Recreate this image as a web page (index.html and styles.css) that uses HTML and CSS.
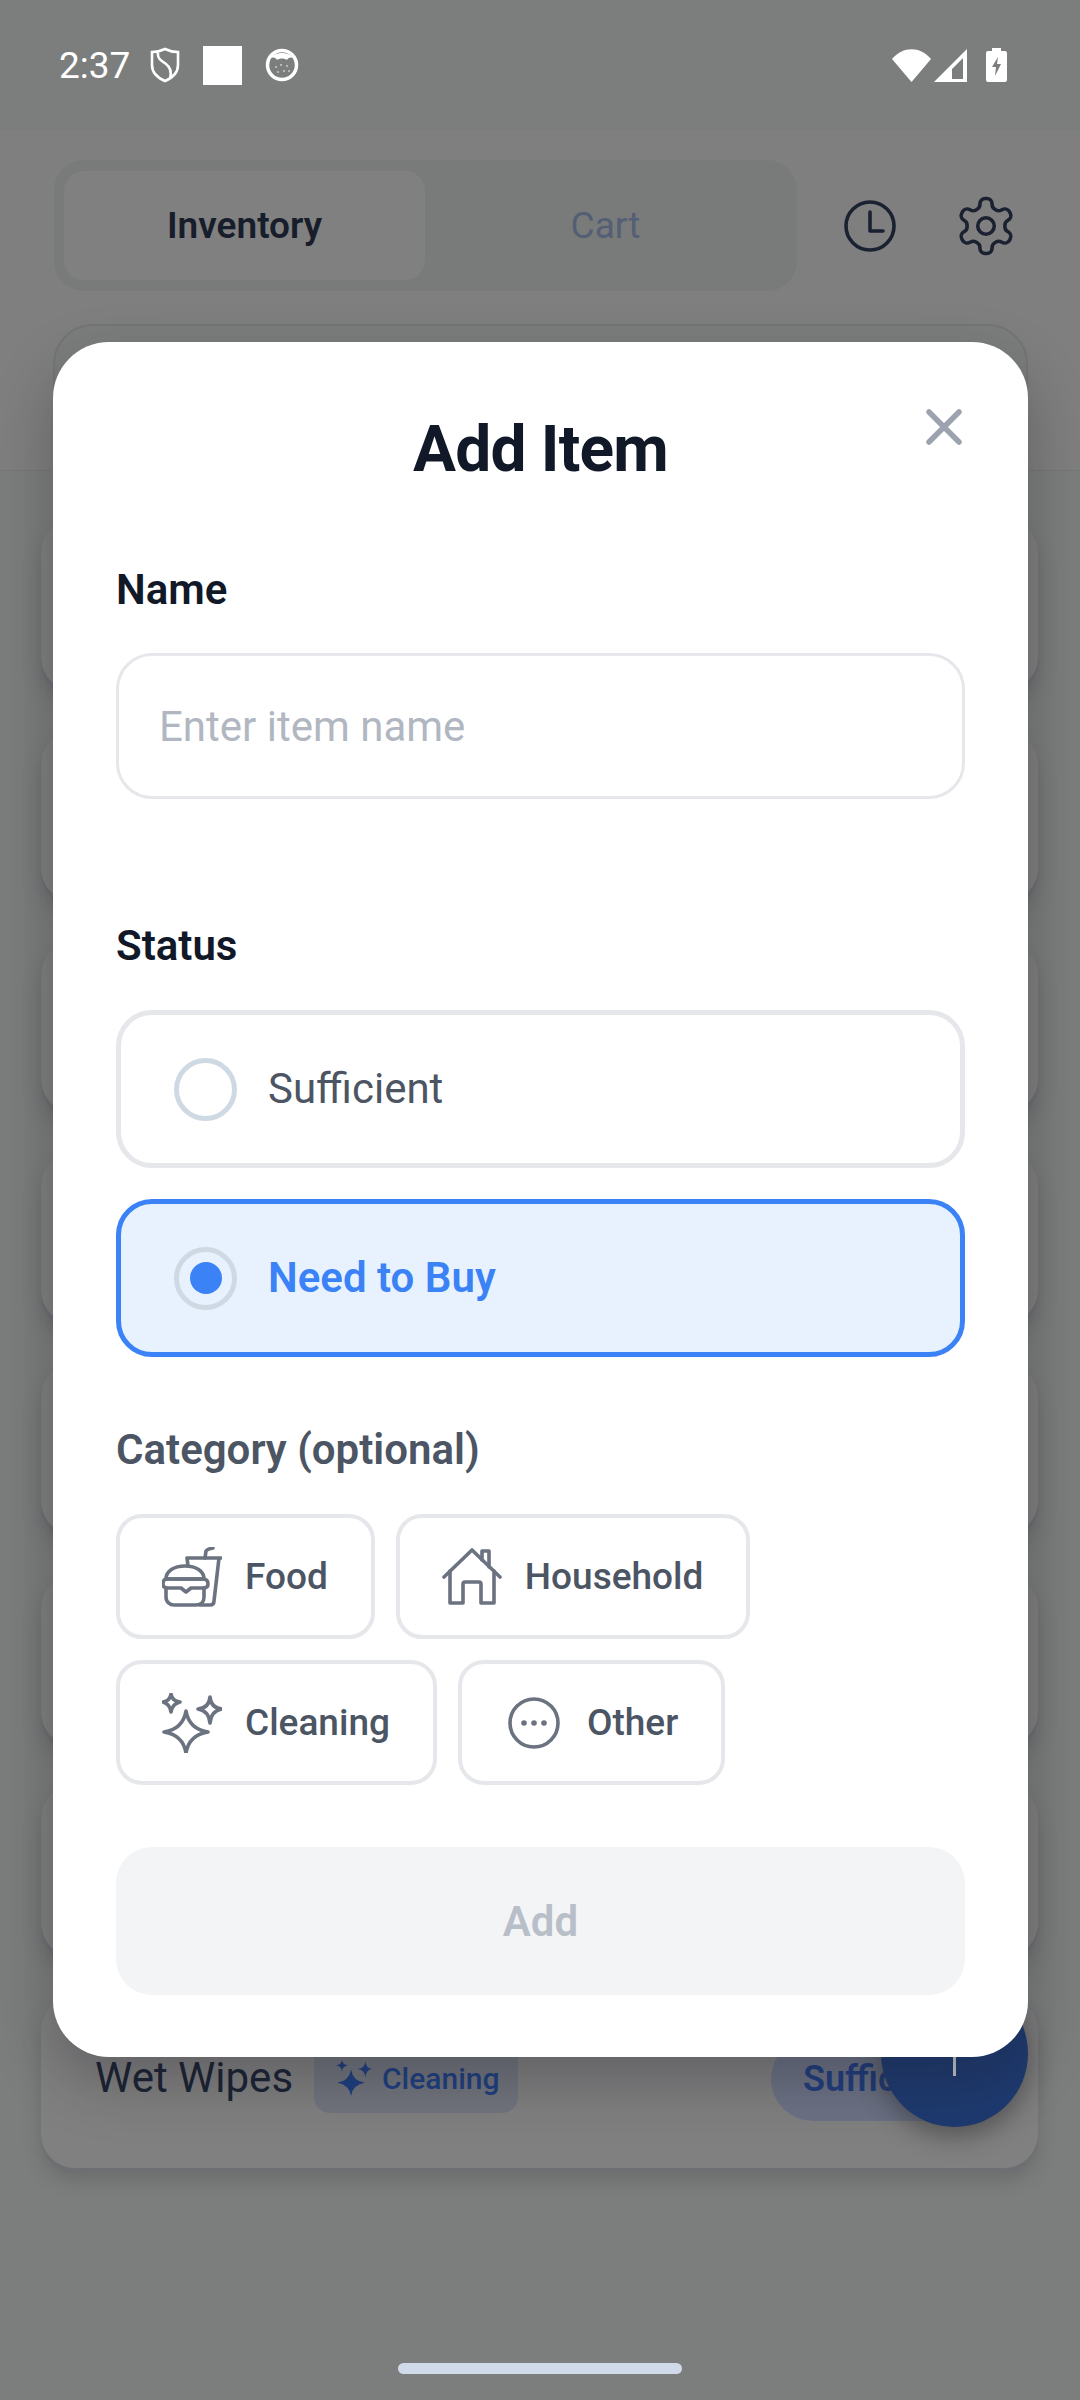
FILE: index.html
```html
<!DOCTYPE html>
<html lang="en">

<head>
    <meta charset="UTF-8">
    <title>Add Item</title>
    <link rel="stylesheet" href="styles.css">
</head>

<body>
    <div class="screen">
        <div class="status-bar">
            <div class="status-left">
                <span class="status-time">2:37</span>
                <svg class="icon-shield" width="30" height="36" viewBox="0 0 30 36" fill="none" stroke="#fff" stroke-width="2.6">
                    <path d="M15 2 C19 4 24 5 28 5 V18 C28 26 22 31 15 34 C8 31 2 26 2 18 V5 C6 5 11 4 15 2z" />
                    <path d="M8 6 C7 12 12 14 16 17 C20 20 22 24 20 31" />
                </svg>
                <div class="status-square"></div>
                <svg class="icon-face" width="34" height="34" viewBox="0 0 34 34">
                    <circle cx="17" cy="17" r="14.5" fill="#7c7e7d" stroke="#fff" stroke-width="3.5" />
                    <path d="M5 11 C9 3 25 3 29 11 C26 8 23 10 22 12 C19 10 15 10 12 12 C11 10 8 8 5 11z" fill="#fff" />
                    <g fill="#c9ccce">
                        <circle cx="11" cy="19" r="1" /><circle cx="16" cy="17" r="1" /><circle cx="22" cy="18" r="1" />
                        <circle cx="13" cy="24" r="1" /><circle cx="19" cy="23" r="1" /><circle cx="24" cy="23" r="1" />
                    </g>
                </svg>
            </div>
            <div class="status-right">
                <svg width="39" height="33" viewBox="0 0 39 33">
                    <path d="M0 10 C11 -3 28 -3 39 10 L19.5 33z" fill="#fff" />
                </svg>
                <svg width="33" height="33" viewBox="0 0 33 33">
                    <path fill-rule="evenodd" d="M33 0 V33 H0z M29 9 L18 20 V30 H29z" fill="#fff" />
                </svg>
                <svg class="icon-battery" width="21" height="34" viewBox="0 0 21 34">
                    <path d="M6 0 H15 V3 H19 Q21 3 21 5 V32 Q21 34 19 34 H2 Q0 34 0 32 V5 Q0 3 2 3 H6z" fill="#fff" />
                    <path d="M12 9 L6 19 H10 L9 28 L15 16 H11z" fill="#7c7e7d" />
                </svg>
            </div>
        </div>

        <div class="top-area">
            <div class="tabs-row">
                <div class="tabs">
                    <div class="tab tab-active">Inventory</div>
                    <div class="tab">Cart</div>
                </div>
                <svg class="icon-clock" width="54" height="54" viewBox="0 0 54 54" fill="none" stroke="#1a2130" stroke-width="3.6" stroke-linecap="round" stroke-linejoin="round">
                    <circle cx="27" cy="27" r="24" />
                    <path d="M27 13 V32 H40" />
                </svg>
                <svg class="icon-gear" width="66" height="66" viewBox="0 0 24 24" fill="none" stroke="#1a2130" stroke-width="1.3" stroke-linecap="round" stroke-linejoin="round">
                    <path d="M12.22 2h-.44a2 2 0 0 0-2 2v.18a2 2 0 0 1-1 1.73l-.43.25a2 2 0 0 1-2 0l-.15-.08a2 2 0 0 0-2.73.73l-.22.38a2 2 0 0 0 .73 2.73l.15.1a2 2 0 0 1 1 1.72v.51a2 2 0 0 1-1 1.74l-.15.09a2 2 0 0 0-.73 2.73l.22.38a2 2 0 0 0 2.73.73l.15-.08a2 2 0 0 1 2 0l.43.25a2 2 0 0 1 1 1.73V20a2 2 0 0 0 2 2h.44a2 2 0 0 0 2-2v-.18a2 2 0 0 1 1-1.73l.43-.25a2 2 0 0 1 2 0l.15.08a2 2 0 0 0 2.73-.73l.22-.39a2 2 0 0 0-.73-2.73l-.15-.08a2 2 0 0 1-1-1.74v-.5a2 2 0 0 1 1-1.74l.15-.09a2 2 0 0 0 .73-2.73l-.22-.38a2 2 0 0 0-2.73-.73l-.15.08a2 2 0 0 1-2 0l-.43-.25a2 2 0 0 1-1-1.73V4a2 2 0 0 0-2-2z" />
                    <circle cx="12" cy="12" r="3" />
                </svg>
            </div>
            <div class="filter-panel"></div>
        </div>

        <div class="list">
            <div class="card"></div>
            <div class="card"></div>
            <div class="card"></div>
            <div class="card"></div>
            <div class="card"></div>
            <div class="card"></div>
            <div class="card"></div>
            <div class="card">
                <span class="card-name">Wet Wipes</span>
                <span class="card-chip">
                    <svg width="36" height="36" viewBox="0 0 60 60" fill="#1e3f80">
                        <path d="M25 16 Q28 35 48 38 Q28 41 25 60 Q22 41 2 38 Q22 35 25 16z" />
                        <path d="M10 0 Q11 8 20 9 Q11 10 10 19 Q9 10 0 9 Q9 8 10 0z" />
                        <path d="M49 2 Q50 14 60 15 Q50 16 49 29 Q48 16 36 15 Q48 14 49 2z" />
                    </svg>
                    Cleaning
                </span>
                <span class="card-status">Sufficient</span>
            </div>
        </div>

        <div class="home-bar"></div>

        <div class="fab"><span class="fab-line"></span></div>

        <div class="modal">
            <svg class="modal-close" width="36" height="36" viewBox="0 0 36 36" fill="none" stroke="#9ca3af" stroke-width="5.5" stroke-linecap="round">
                <path d="M3 3 L33 33 M33 3 L3 33" />
            </svg>
            <h1 class="modal-title">Add Item</h1>

            <div class="field-label">Name</div>
            <div class="text-input">Enter item name</div>

            <div class="field-label status-label">Status</div>
            <div class="option">
                <span class="radio"></span>
                <span class="option-text">Sufficient</span>
            </div>
            <div class="option option-selected">
                <span class="radio"><span class="radio-dot"></span></span>
                <span class="option-text">Need to Buy</span>
            </div>

            <div class="field-label category-label">Category (optional)</div>
            <div class="chips">
                <div class="chip">
                    <svg width="60" height="60" viewBox="0 0 60 60" fill="none" stroke="#6b7280" stroke-width="3.6" stroke-linecap="round" stroke-linejoin="round">
                        <path d="M4 32 C4 24 12 19 23 19 C34 19 42 24 42 32z" />
                        <path d="M5 32 H41 Q46 32 46 37 Q46 41 41 41 H29 L24 45 L19 41 H6 Q1 41 1 37 Q1 32 5 32z" />
                        <path d="M4 41 V50 C4 55 8 58 12 58 H34 C39 58 42 55 42 50 V41" />
                        <path d="M26 19 L25 11 H59 M57 11 L52 54 Q52 58 48 58 H38" />
                        <path d="M43 11 L44 4 Q45 2 51 1" />
                    </svg>
                    <span>Food</span>
                </div>
                <div class="chip">
                    <svg width="60" height="60" viewBox="0 0 60 60" fill="none" stroke="#6b7280" stroke-width="3.6" stroke-linecap="round" stroke-linejoin="round">
                        <path d="M2 30 L30 3 L58 30" />
                        <path d="M8 24 V56 H21 V37 Q21 35 23 35 H37 Q39 35 39 37 V56 H52 V24" />
                        <path d="M40 13 V4 H47 V20" />
                    </svg>
                    <span>Household</span>
                </div>
                <div class="chip">
                    <svg width="60" height="60" viewBox="0 0 60 60" fill="none" stroke="#6b7280" stroke-width="3.6" stroke-linecap="round" stroke-linejoin="round">
                        <path d="M24 18 Q27 36 46 39 Q27 42 24 60 Q21 42 2 39 Q21 36 24 18z" />
                        <path d="M9 1 Q10 8 18 9 Q10 11 9 19 Q8 11 1 9 Q8 8 9 1z" />
                        <path d="M48 4 Q49 15 60 16 Q49 18 48 30 Q47 18 36 16 Q47 15 48 4z" />
                    </svg>
                    <span>Cleaning</span>
                </div>
                <div class="chip">
                    <svg width="60" height="60" viewBox="0 0 60 60" fill="none" stroke="#6b7280" stroke-width="3.6">
                        <circle cx="30" cy="30" r="24" />
                        <g fill="#6b7280" stroke="none">
                            <circle cx="20" cy="30" r="2.8" />
                            <circle cx="30" cy="30" r="2.8" />
                            <circle cx="40" cy="30" r="2.8" />
                        </g>
                    </svg>
                    <span>Other</span>
                </div>
            </div>

            <div class="add-button">Add</div>
        </div>
    </div>
</body>

</html>
```

FILE: styles.css
```css
* {
    box-sizing: border-box;
}

body {
    margin: 0;
    background-color: #7c7e7d;
    font-family: Roboto, "Liberation Sans", sans-serif;
}

.screen {
    position: relative;
    display: flex;
    flex-direction: column;
    width: 1080px;
    height: 2400px;
    overflow: hidden;
}

/* status bar */
.status-bar {
    display: flex;
    justify-content: space-between;
    align-items: center;
    height: 130px;
    padding: 0 73px 0 59px;
}

.status-left {
    display: flex;
    align-items: center;
}

.status-time {
    width: 91px;
    color: #fff;
    font-size: 37px;
}

.status-square {
    width: 39px;
    height: 39px;
    margin: 0 23px;
    background-color: #fff;
}

.status-right {
    display: flex;
    align-items: center;
    gap: 3px;
}

.icon-battery {
    margin-left: 16px;
}

/* header behind the dialog */
.top-area {
    height: 341px;
    padding: 30px 0 0 54px;
    background-color: #7f7f7f;
    border-bottom: 1px solid #767877;
}

.tabs-row {
    display: flex;
    align-items: center;
}

.tabs {
    display: flex;
    width: 743px;
    height: 131px;
    padding: 11px 10px;
    background-color: #797b7a;
    border-radius: 30px;
}

.tab {
    display: flex;
    justify-content: center;
    align-items: center;
    width: 361px;
    color: #545e74;
    font-size: 37px;
    font-weight: 600;
}

.tab-active {
    background-color: #808080;
    border-radius: 20px;
    color: #171d2a;
}

.tab-active + .tab {
    font-weight: 400;
}

.icon-clock {
    margin-left: 46px;
}

.icon-gear {
    margin-left: 56px;
}

.filter-panel {
    width: 975px;
    height: 130px;
    margin: 33px 0 0 -1px;
    background-color: #7c7e7d;
    border: 2px solid #747675;
    border-radius: 40px;
}

.list {
    display: flex;
    flex-direction: column;
    gap: 39px;
    padding: 48px 42px 0 41px;
}

.card {
    display: flex;
    align-items: flex-start;
    height: 172px;
    padding: 41px 0 0 54px;
    background-color: #808080;
    border-radius: 34px;
    box-shadow: 0 5px 0 #6e6f72, 0 12px 18px rgba(60, 60, 65, 0.25);
}

.card-name {
    width: 219px;
    height: 84px;
    line-height: 82px;
    color: #1a2233;
    font-size: 42px;
}

.card-chip {
    display: flex;
    align-items: center;
    gap: 10px;
    width: 204px;
    height: 70px;
    margin-top: 6px;
    padding-left: 22px;
    background-color: #72757d;
    border-radius: 16px;
    color: #1e3f80;
    font-size: 30px;
    font-weight: 500;
}

.card-status {
    width: 230px;
    height: 84px;
    margin-left: 253px;
    padding-left: 32px;
    line-height: 84px;
    background-color: #6c7284;
    border-radius: 42px;
    color: #1f3d7d;
    font-size: 36px;
    font-weight: 600;
}

.home-bar {
    width: 284px;
    height: 11px;
    margin: auto auto 26px;
    background-color: #d0dae8;
    border-radius: 6px;
}

.fab {
    position: absolute;
    left: 881px;
    top: 1980px;
    display: flex;
    justify-content: center;
    width: 147px;
    height: 147px;
    background-color: #1e3a70;
    border-radius: 50%;
    box-shadow: 0 10px 24px rgba(40, 40, 45, 0.45);
}

.fab-line {
    width: 3px;
    height: 20px;
    margin-top: 76px;
    background-color: #c4c8cc;
}

/* dialog */
.modal {
    position: absolute;
    left: 53px;
    top: 342px;
    width: 975px;
    height: 1715px;
    padding: 70px 63px 0;
    background-color: #fff;
    border-radius: 56px;
    box-shadow: 0 24px 60px rgba(25, 25, 35, 0.3);
}

.modal-close {
    position: absolute;
    top: 67px;
    right: 66px;
}

.modal-title {
    margin: 0 0 77px;
    color: #111827;
    font-size: 64px;
    line-height: 76px;
    font-weight: 700;
    letter-spacing: -0.8px;
    text-align: center;
}

.field-label {
    height: 48px;
    padding-top: 1px;
    color: #111827;
    font-size: 42px;
    line-height: 48px;
    font-weight: 600;
}

.text-input {
    display: flex;
    align-items: center;
    height: 146px;
    margin-top: 40px;
    padding-left: 40px;
    border: 3px solid #e5e7eb;
    border-radius: 36px;
    color: #b1b7c1;
    font-size: 42px;
}

.status-label {
    margin-top: 122px;
    margin-bottom: 41px;
}

.option {
    display: flex;
    align-items: center;
    gap: 31px;
    height: 158px;
    margin-bottom: 31px;
    padding-left: 53px;
    border: 5px solid #e5e7eb;
    border-radius: 36px;
    color: #4b5563;
    font-size: 42px;
}

.option-text {
    margin-bottom: 2px;
}

.option-selected {
    background-color: #e8f2fe;
    border-color: #3b82f6;
    color: #3b82f6;
    font-weight: 600;
}

.radio {
    display: flex;
    justify-content: center;
    align-items: center;
    width: 63px;
    height: 63px;
    border: 5px solid #cfd9e4;
    border-radius: 50%;
}

.radio-dot {
    width: 32px;
    height: 32px;
    background-color: #3b82f6;
    border-radius: 50%;
}

.category-label {
    margin-top: 68px;
    color: #4b5563;
}

.chips {
    display: flex;
    flex-wrap: wrap;
    gap: 21px 21px;
    margin-top: 41px;
}

.chip {
    display: flex;
    align-items: center;
    gap: 23px;
    height: 125px;
    padding: 0 43px 0 42px;
    border: 4px solid #e5e7eb;
    border-radius: 26px;
    color: #4b5563;
    font-size: 37px;
    font-weight: 500;
}

.add-button {
    display: flex;
    justify-content: center;
    align-items: center;
    height: 148px;
    margin-top: 62px;
    background-color: #f3f4f6;
    border-radius: 36px;
    color: #b8bfc9;
    font-size: 42px;
    font-weight: 600;
}
```
